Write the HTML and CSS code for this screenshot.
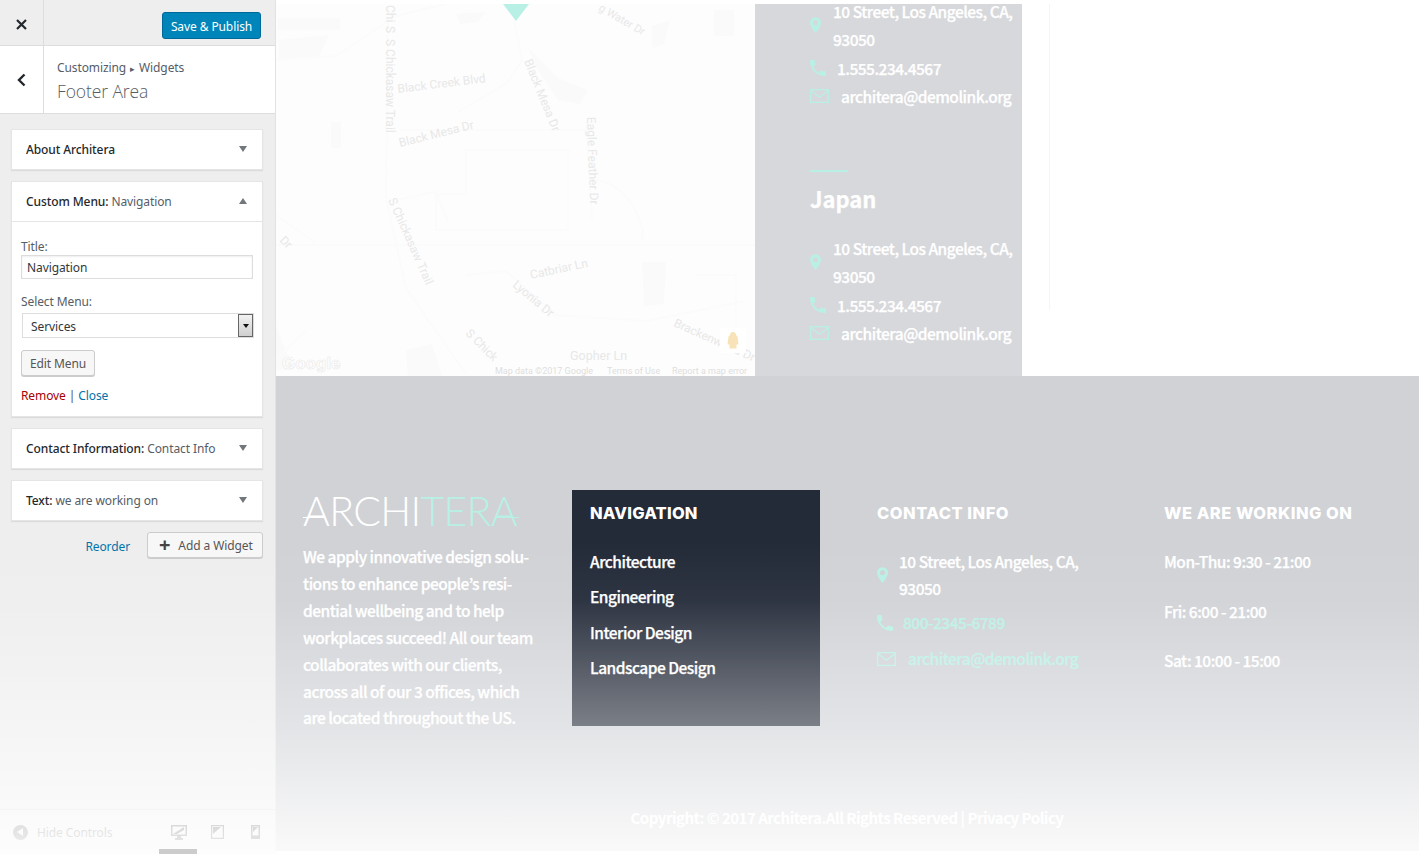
FILE: index.html
```html
<!DOCTYPE html>
<html lang="en">
<head>
    <meta charset="UTF-8">
    <title>Customize: Architera</title>
    <link rel="stylesheet" href="styles.css">
</head>
<body>
    <svg class="icon-defs" width="0" height="0">
        <symbol id="pin" viewBox="5 2 14 20"><path d="M12 2a7 7 0 0 0-7 7c0 5 7 13 7 13s7-8 7-13a7 7 0 0 0-7-7zm0 10.200a3.200 3.200 0 1 1 0-6.400 3.200 3.200 0 0 1 0 6.400z"/></symbol>
        <symbol id="phone" viewBox="3 3 18 18"><path d="M6.600 10.800c1.400 2.800 3.800 5.100 6.600 6.600l2.200-2.200c.3-.3.7-.4 1-.2 1.100.4 2.300.6 3.600.6.600 0 1 .4 1 1V20c0 .6-.4 1-1 1C10.600 21 3 13.400 3 4c0-.6.4-1 1-1h3.500c.6 0 1 .4 1 1 0 1.300.2 2.500.6 3.600.1.300 0 .7-.2 1l-2.300 2.200z"/></symbol>
        <symbol id="mail" viewBox="0 0 19 14"><path d="M.7.7h17.600v12.600H.7zM.7 1.600l8.800 6.600 8.800-6.600" fill="none" stroke="currentColor" stroke-width="1.300"/></symbol>
    </svg>

    <!-- customizer sidebar -->
    <aside class="sidebar">
        <div class="topbar">
            <div class="close-box">
                <svg width="11" height="11" viewBox="0 0 11 11"><path d="M1 1l9 9M10 1l-9 9" fill="none" stroke="#23282d" stroke-width="2.200"/></svg>
            </div>
            <button class="publish">Save &amp; Publish</button>
        </div>
        <div class="panel-head">
            <div class="back-box">
                <svg width="9" height="14" viewBox="0 0 9 14"><path d="M7.500 1.500L2 7l5.500 5.500" fill="none" stroke="#23282d" stroke-width="2.400"/></svg>
            </div>
            <div class="panel-title">
                <div class="crumb">Customizing <span class="crumb-sep">&#9656;</span> Widgets</div>
                <div class="area-name">Footer Area</div>
            </div>
        </div>

        <div class="widgets">
            <div class="widget">
                <div class="widget-top"><span><b>About Architera</b></span><i class="arrow"></i></div>
            </div>
            <div class="widget">
                <div class="widget-top open"><span><b>Custom Menu:</b> Navigation</span><i class="arrow up"></i></div>
                <div class="widget-body">
                    <label class="field-label">Title:</label>
                    <input class="field-input" type="text" value="Navigation">
                    <label class="field-label second">Select Menu:</label>
                    <div class="fake-select"><span>Services</span><i class="select-btn"></i></div>
                    <button class="edit-menu">Edit Menu</button>
                    <div class="widget-actions"><a class="remove">Remove</a> | <a class="close-link">Close</a></div>
                </div>
            </div>
            <div class="widget">
                <div class="widget-top"><span><b>Contact Information:</b> Contact Info</span><i class="arrow"></i></div>
            </div>
            <div class="widget">
                <div class="widget-top"><span><b>Text:</b> we are working on</span><i class="arrow"></i></div>
            </div>
            <div class="add-row">
                <a class="reorder">Reorder</a>
                <button class="add-widget"><span class="plus">+</span>Add a Widget</button>
            </div>
        </div>

        <div class="side-foot">
            <div class="hide-controls"><i class="hide-icon"></i>Hide Controls</div>
            <div class="devices">
                <svg class="device active" width="16" height="15" viewBox="0 0 16 15"><path d="M0 0h16v11H10v2h2v2H4v-2h2v-2H0zM1.500 1.500v8h13v-8z" fill-rule="evenodd"/><path d="M2 9l11-7v3L6 9z"/></svg>
                <svg class="device" width="13" height="14" viewBox="0 0 13 14"><path d="M0 0h13v14H0zM1.200 1.200v11.600h10.600V1.200z" fill-rule="evenodd"/><path d="M2 2h8L2 9z"/></svg>
                <svg class="device" width="9" height="14" viewBox="0 0 9 14"><path d="M0 0h9v14H0zM1.500 1.500v9h6v-9z" fill-rule="evenodd"/><path d="M2 2h5L2 7z"/></svg>
            </div>
        </div>
    </aside>

    <main class="site">
        <section class="contact-strip">
            <div class="map">
                <svg width="480" height="372" viewBox="0 4 480 372">
                    <g class="blobs">
                        <path d="M2 18h62v12H2zM3 40l50-5-10 22-40 2zM180 14l30-2-8 10-18 2zM252 48l30 30 30 12-8 14-22-4-20-30zM55 122h10v26H55zM376 26l18-6-6 24-12 4zM438 10h20v26h-20zM366 262h24l-2 42-20 2zM130 350l26-6 10 32h-34zM0 326l18 44H0z"/>
                    </g>
                    <g class="roads">
                        <path d="M0 60l60-4 60-40 50-12M238 20l8 40-14 22-50 30M112 8l-2 190 20 90 60 86M124 130h190M190 150h102v80H160v-36h30zM120 200l40-8 12 30M0 245h480M0 215l40 28M310 120l6 100M320 180c30 4 50 40 46 60M190 275l40-4 50 44 90 6 100-20M420 275h40v70M0 360l30-30"/>
                    </g>
                    <g class="labels">
                        <text transform="translate(110 5) rotate(90)">Chi</text>
                        <text transform="translate(110 26) rotate(90)">S</text>
                        <text transform="translate(110 39) rotate(90)">S Chickasaw Trail</text>
                        <text transform="translate(122 93) rotate(-7)">Black Creek Blvd</text>
                        <text transform="translate(124 147) rotate(-14)">Black Mesa Dr</text>
                        <text transform="translate(248 61) rotate(68)">Black Mesa Dr</text>
                        <text transform="translate(311 117) rotate(88)">Eagle Feather Dr</text>
                        <text transform="translate(112 200) rotate(66)">S Chickasaw Trail</text>
                        <text transform="translate(255 279) rotate(-12)">Catbriar Ln</text>
                        <text transform="translate(236 286) rotate(40)">Lyonia Dr</text>
                        <text transform="translate(397 326) rotate(24)">Brackenwood Dr</text>
                        <text transform="translate(189 334) rotate(45)">S Chick</text>
                        <text class="street-small" transform="translate(322 10) rotate(30)">g Water Dr</text>
                        <text transform="translate(3 241) rotate(45)">Dr</text>
                        <text class="street-big" x="294" y="360">Gopher Ln</text>
                    </g>
                    <polygon class="marker" points="227,4 253,4 240,21"/>
                    <text class="google" x="6" y="369">Google</text>
                    <g class="map-credits">
                        <text x="219" y="374">Map data &#169;2017 Google</text>
                        <text x="331" y="374">Terms of Use</text>
                        <text x="396" y="374">Report a map error</text>
                    </g>
                    <rect class="peg-box" x="444" y="328" width="26" height="25"/>
                    <path class="peg" d="M457 332a3 3 0 0 1 3 3l1.500 1.500 1 8h-2v4h-7v-4h-2l1-8 1.500-1.500a3 3 0 0 1 3-3z"/>
                </svg>
            </div>

            <div class="offices">
                <ul class="office-list first">
                    <li class="with-pin"><svg class="ico pin"><use href="#pin"/></svg><span class="addr">10 Street, Los Angeles, CA,<br>93050</span></li>
                    <li><svg class="ico phone"><use href="#phone"/></svg><span class="tel">1.555.234.4567</span></li>
                    <li><svg class="ico mail"><use href="#mail"/></svg><span class="em">architera@demolink.org</span></li>
                </ul>
                <div class="office-rule"></div>
                <h3 class="office-name">Japan</h3>
                <ul class="office-list">
                    <li class="with-pin"><svg class="ico pin"><use href="#pin"/></svg><span class="addr">10 Street, Los Angeles, CA,<br>93050</span></li>
                    <li><svg class="ico phone"><use href="#phone"/></svg><span class="tel">1.555.234.4567</span></li>
                    <li><svg class="ico mail"><use href="#mail"/></svg><span class="em">architera@demolink.org</span></li>
                </ul>
            </div>
            <div class="faint-rule"></div>
        </section>

        <footer class="site-footer">
            <div class="footer-cols">
                <div class="about">
                    <div class="logo"><span>ARCHI</span><span class="mint">TERA</span></div>
                    <p>We apply innovative design solu-<br>tions to enhance people&rsquo;s resi-<br>dential wellbeing and to help<br>workplaces succeed! All our team<br>collaborates with our clients,<br>across all of our 3 offices, which<br>are located throughout the US.</p>
                </div>
                <div class="nav-col">
                    <div class="nav-box">
                        <h4 class="foot-title">NAVIGATION</h4>
                        <a>Architecture</a>
                        <a>Engineering</a>
                        <a>Interior Design</a>
                        <a>Landscape Design</a>
                    </div>
                </div>
                <div class="contact-col">
                    <h4 class="foot-title">CONTACT INFO</h4>
                    <div class="c-row c-addr"><svg class="ico pin"><use href="#pin"/></svg><span class="addr">10 Street, Los Angeles, CA,<br>93050</span></div>
                    <div class="c-row c-tel"><svg class="ico phone"><use href="#phone"/></svg><span class="tel mint">800-2345-6789</span></div>
                    <div class="c-row c-mail"><svg class="ico mail"><use href="#mail"/></svg><span class="em mint">architera@demolink.org</span></div>
                </div>
                <div class="hours-col">
                    <h4 class="foot-title">WE ARE WORKING ON</h4>
                    <p>Mon-Thu: 9:30 - 21:00</p>
                    <p>Fri: 6:00 - 21:00</p>
                    <p>Sat: 10:00 - 15:00</p>
                </div>
            </div>
            <div class="copyright">Copyright: &copy; 2017 Architera.All Rights Reserved | Privacy Policy</div>
        </footer>
    </main>
</body>
</html>
```

FILE: styles.css
```css
/* page */
body {
    margin: 0;
    height: 854px;
    overflow: hidden;
    display: flex;
    background: #fff;
    position: relative;
    font-family: "Noto Sans", "Open Sans", sans-serif;
}
/* white fade over the bottom of the whole screen */
body::after {
    content: "";
    position: absolute;
    z-index: 1;
    left: 0;
    right: 0;
    top: 0;
    bottom: 0;
    pointer-events: none;
    background: linear-gradient(to bottom,
        rgba(255,255,255,0) 540px,
        rgba(255,255,255,0.05) 600px,
        rgba(255,255,255,0.4) 726px,
        rgba(255,255,255,0.88) 851px);
}
.icon-defs {
    position: absolute;
}

/* sidebar */
.sidebar {
    width: 276px;
    flex: none;
    box-sizing: border-box;
    height: 854px;
    background: #eee;
    border-right: 1px solid #e2e2e2;
    display: flex;
    flex-direction: column;
    font-size: 12px;
    letter-spacing: -0.1px;
    color: #32373c;
}
.topbar {
    height: 46px;
    box-sizing: border-box;
    display: flex;
    align-items: center;
    justify-content: space-between;
    border-bottom: 1px solid #ddd;
    padding-right: 14px;
}
.close-box {
    width: 44px;
    height: 45px;
    box-sizing: border-box;
    padding-top: 4px;
    border-right: 1px solid #ddd;
    display: flex;
    align-items: center;
    justify-content: center;
}
.publish {
    width: 99px;
    height: 27px;
    margin-top: 6px;
    padding: 2px 0 0 0;
    background: #0085ba;
    border: 1px solid #006799;
    border-radius: 3px;
    color: #fff;
    font-family: inherit;
    font-size: 12px;
    letter-spacing: inherit;
}
.panel-head {
    height: 68px;
    box-sizing: border-box;
    display: flex;
    background: #fff;
    border-bottom: 1px solid #ddd;
}
.back-box {
    width: 44px;
    box-sizing: border-box;
    border-right: 1px solid #ddd;
    display: flex;
    align-items: center;
    justify-content: center;
}
.panel-title {
    padding: 13px 0 0 13px;
}
.crumb {
    font-size: 12px;
    line-height: 17px;
    color: #555d66;
}
.crumb-sep {
    font-size: 9px;
    margin: 0 1px;
}
.area-name {
    font-size: 17.500px;
    line-height: 28px;
    font-weight: 300;
    font-family: "Open Sans", sans-serif;
    color: #555d66;
}

/* widgets */
.widgets {
    padding: 15px 12px 0 11px;
}
.widget {
    background: #fff;
    border: 1px solid #e5e5e5;
    box-shadow: 0 1px 1px rgba(0,0,0,0.08);
    margin-bottom: 11px;
}
.widget-top {
    height: 39px;
    display: flex;
    align-items: center;
    justify-content: space-between;
    padding: 0 15px 0 14px;
    color: #555d66;
}
.widget-top b {
    font-weight: 500;
    color: #23282d;
}
.widget-top.open {
    border-bottom: 1px solid #e5e5e5;
}
.arrow {
    width: 0;
    height: 0;
    margin-bottom: 2px;
    border-left: 4px solid transparent;
    border-right: 4px solid transparent;
    border-top: 6px solid #72777c;
}
.arrow.up {
    border-top: 0;
    border-bottom: 6px solid #72777c;
}
.widget-body {
    padding: 17px 9px 12px 9px;
}
.field-label {
    display: block;
    line-height: 16px;
    color: #555d66;
}
.field-label.second {
    margin-top: 15px;
}
.field-input {
    display: block;
    width: 100%;
    height: 24px;
    box-sizing: border-box;
    margin-top: 0;
    padding: 0 5px;
    border: 1px solid #ddd;
    box-shadow: inset 0 1px 2px rgba(0,0,0,0.07);
    font-family: inherit;
    font-size: 12px;
    letter-spacing: inherit;
    color: #32373c;
}
.fake-select {
    height: 25px;
    box-sizing: border-box;
    margin: 3px -1px 0 1px;
    display: flex;
    align-items: center;
    justify-content: space-between;
    padding-left: 8px;
    border: 1px solid #ddd;
    color: #32373c;
}
.fake-select span {
    padding-top: 1px;
}
.select-btn {
    width: 15px;
    height: 23px;
    box-sizing: border-box;
    border: 1px solid #666;
    background: linear-gradient(to bottom, #f2f2f2, #cfcfcf);
    display: flex;
    align-items: center;
    justify-content: center;
}
.select-btn::after {
    content: "";
    border-left: 3px solid transparent;
    border-right: 3px solid transparent;
    border-top: 4px solid #111;
}
.edit-menu {
    display: block;
    width: 74px;
    height: 26px;
    margin-top: 12px;
    padding: 0;
    background: #f7f7f7;
    border: 1px solid #ccc;
    border-radius: 3px;
    box-shadow: 0 1px 0 #ccc;
    font-family: inherit;
    font-size: 12px;
    letter-spacing: inherit;
    color: #555;
}
.widget-actions {
    margin-top: 11px;
    line-height: 17px;
    color: #555;
}
.remove {
    color: #a00;
}
.close-link {
    color: #0073aa;
}
.add-row {
    display: flex;
    justify-content: flex-end;
    align-items: center;
    gap: 17px;
}
.reorder {
    color: #0073aa;
    margin-top: 3px;
}
.add-widget {
    width: 116px;
    height: 26px;
    padding: 0 0 0 11px;
    display: flex;
    align-items: center;
    background: #f7f7f7;
    border: 1px solid #ccc;
    border-radius: 3px;
    box-shadow: 0 1px 0 #ccc;
    font-family: inherit;
    font-size: 12px;
    letter-spacing: inherit;
    color: #555;
}
.plus {
    font-size: 20px;
    font-weight: 700;
    line-height: 20px;
    color: #444;
    margin-right: 8px;
}
.side-foot {
    margin-top: auto;
    height: 45px;
    box-sizing: border-box;
    border-top: 1px solid #ddd;
    display: flex;
    align-items: center;
    justify-content: space-between;
    padding: 0 15px 0 13px;
    color: #777;
}
.hide-controls {
    display: flex;
    align-items: center;
    gap: 9px;
}
.hide-icon {
    width: 15px;
    height: 15px;
    border-radius: 50%;
    background: #777;
    display: flex;
    align-items: center;
    justify-content: center;
}
.hide-icon::after {
    content: "";
    margin-right: 2px;
    border-top: 4px solid transparent;
    border-bottom: 4px solid transparent;
    border-right: 6px solid #eee;
}
.devices {
    display: flex;
    align-items: center;
    gap: 24px;
    position: relative;
}
.device {
    fill: #555;
}
.device:last-child {
    margin-left: 3px;
}
.devices::after {
    content: "";
    position: absolute;
    z-index: 2;
    left: -12px;
    top: 24px;
    width: 38px;
    height: 8px;
    background: #ccc;
}

/* map + offices */
.site {
    flex: 1;
    min-width: 0;
    font-family: "Noto Sans CJK JP", "Noto Sans", sans-serif;
    color: #fff;
}
.contact-strip {
    margin-top: 4px;
    height: 372px;
    display: flex;
    overflow: hidden;
}
.map {
    width: 479px;
    flex: none;
    overflow: hidden;
    background: #fdfdfd;
}
.map svg {
    display: block;
}
.blobs path {
    fill: #fafafa;
}
.roads path {
    fill: none;
    stroke: #fbfbfb;
    stroke-width: 2;
}
.labels text {
    font-family: Roboto, sans-serif;
    font-size: 12px;
    fill: #e8e8e8;
}
.labels .street-big {
    font-size: 12.500px;
}
.labels .street-small {
    font-size: 11px;
}
.marker {
    fill: #b9f0e5;
}
.google {
    font-family: "Liberation Sans", sans-serif;
    font-size: 17px;
    font-weight: 700;
    fill: #fff;
    stroke: #ececec;
    stroke-width: 0.7;
}
.map-credits text {
    font-family: Roboto, sans-serif;
    font-size: 9px;
    fill: #dedede;
}
.peg-box {
    fill: #fff;
}
.peg {
    fill: #f8e3b8;
}
.offices {
    width: 267px;
    flex: none;
    box-sizing: border-box;
    padding-left: 55px;
    background: #d7d8db;
    font-size: 15.500px;
    font-weight: 500;
    letter-spacing: -0.5px;
    line-height: 28.300px;
    -webkit-text-stroke: 0.25px #fff;
}
.office-list {
    list-style: none;
    margin: 0;
    padding: 0;
}
.office-list.first {
    margin-top: -7px;
}
.office-list li {
    display: flex;
    align-items: center;
}
.ico {
    flex: none;
    fill: #b9f0e5;
    color: #b9f0e5;
}
.ico.pin {
    width: 11px;
    height: 16px;
}
.ico.phone {
    width: 16px;
    height: 16px;
}
.ico.mail {
    width: 19px;
    height: 14px;
}
.office-list .addr {
    margin-left: 12px;
    white-space: nowrap;
}
.office-list .tel {
    margin-left: 11px;
}
.office-list .em {
    margin-left: 12px;
}
.office-rule {
    width: 38px;
    height: 2px;
    margin-top: 60px;
    background: #b9f0e5;
}
.office-name {
    margin: 10px 0 20px 0;
    font-family: "Noto Sans CJK JP", sans-serif;
    font-size: 22px;
    line-height: 32px;
    letter-spacing: 0;
    font-weight: 700;
}
.faint-rule {
    width: 1px;
    height: 306px;
    margin-left: 27px;
    background: #f5f5f5;
}

/* footer */
.site-footer {
    height: 475px;
    box-sizing: border-box;
    padding: 114px 28px 0 27px;
    background: #d0d2d6;
    display: flex;
    flex-direction: column;
}
.footer-cols {
    display: grid;
    grid-template-columns: 269px 305px 287px 1fr;
    height: 236px;
    font-size: 15.500px;
    font-weight: 500;
    letter-spacing: -0.5px;
    -webkit-text-stroke: 0.25px;
}
.logo {
    position: relative;
    height: 44px;
    font-family: Lato, sans-serif;
    font-weight: 300;
    font-size: 41px;
    line-height: 42px;
    white-space: nowrap;
    letter-spacing: -0.7px;
    -webkit-text-stroke: 0;
}
.mint {
    color: #b9f0e5;
}
.logo::before,
.logo::after {
    content: "";
    position: absolute;
    top: 27px;
    height: 1px;
}
.logo::before {
    left: 0;
    width: 22px;
    background: #fff;
}
.logo::after {
    left: 192px;
    width: 24px;
    background: #b9f0e5;
}
.about p {
    margin: 9px 0 0 0;
    line-height: 26.900px;
    white-space: nowrap;
}
.nav-box {
    width: 248px;
    height: 236px;
    box-sizing: border-box;
    padding: 13px 18px 0 18px;
    background: #232a38;
}
.foot-title {
    margin: 0;
    font-family: Inter, sans-serif;
    font-size: 16.500px;
    line-height: 20px;
    font-weight: 800;
    letter-spacing: 0.5px;
    -webkit-text-stroke: 0;
}
.nav-box a {
    display: block;
    line-height: 35.300px;
}
.nav-box .foot-title {
    margin-bottom: 21px;
    letter-spacing: 0.2px;
}
.contact-col .foot-title,
.hours-col .foot-title {
    margin-top: 13px;
}
.c-row {
    display: flex;
    align-items: center;
}
.c-addr {
    margin-top: 25px;
    line-height: 26.500px;
}
.c-addr .addr {
    margin-left: 11px;
    white-space: nowrap;
}
.c-tel {
    margin-top: 8px;
    line-height: 27px;
}
.c-tel .tel {
    margin-left: 10px;
}
.c-mail {
    margin-top: 9px;
    line-height: 27px;
}
.c-mail .em {
    margin-left: 12px;
}
.hours-col p {
    margin: 0;
    line-height: 49.500px;
}
.hours-col .foot-title + p {
    margin-top: 14px;
}
.copyright {
    margin-top: 78px;
    text-align: center;
    font-size: 15px;
    font-weight: 700;
    letter-spacing: -0.5px;
    line-height: 27px;
}
```
